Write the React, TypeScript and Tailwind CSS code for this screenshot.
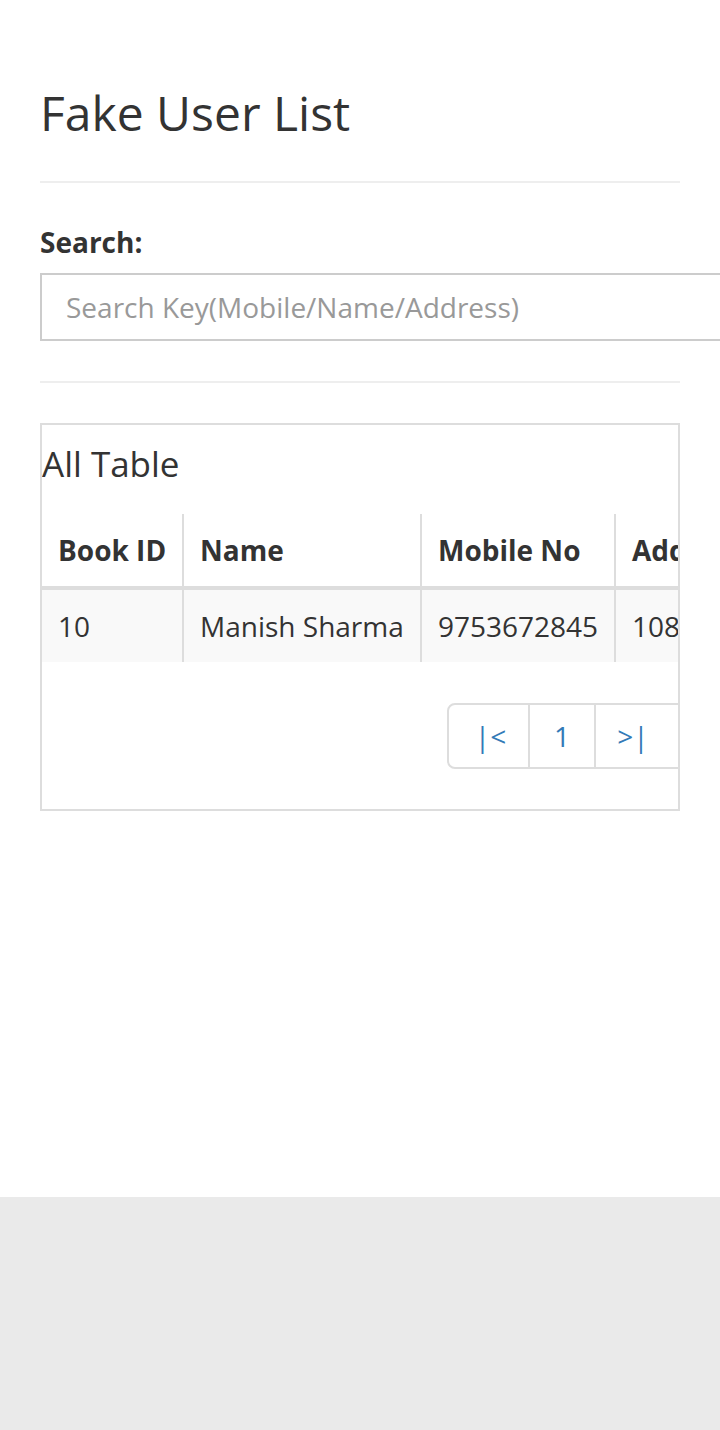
import React from 'react';

const FONT = { fontFamily: '"Open Sans", "Noto Sans", sans-serif' };

const columns = [
  { key: 'id', label: 'Book ID', width: 'w-[140px]' },
  { key: 'name', label: 'Name', width: 'w-[238px]' },
  { key: 'mobile', label: 'Mobile No', width: 'w-[194px]' },
  { key: 'address', label: 'Address', width: 'w-[420px]' },
];

const rows = [
  { id: '10', name: 'Manish Sharma', mobile: '9753672845', address: '108, Vijay Nagar, Indore' },
];

function Pagination() {
  return (
    <div className="flex justify-end mt-[41px] mb-[40px] -mr-[2px]">
      <a className="flex items-center justify-center w-[83px] h-[66px] pl-[4px] border-2 border-[#ddd] rounded-l-[8px] text-[#337ab7] text-[28px] leading-[40px]">
        |&lt;
      </a>
      <a className="flex items-center justify-center w-[68px] h-[66px] -ml-[2px] border-2 border-[#ddd] text-[#337ab7] text-[28px] leading-[40px]">
        1
      </a>
      <a className="flex items-center justify-center w-[86px] h-[66px] -ml-[2px] pr-[8px] border-2 border-[#ddd] text-[#337ab7] text-[28px] leading-[40px]">
        &gt;|
      </a>
    </div>
  );
}

export default function App() {
  return (
    <div className="min-h-[1430px] bg-[#eaeaea] overflow-hidden text-[#333]" style={FONT}>
      <div className="bg-white h-[1197px] px-10 pt-[87px]">
        <h1 className="text-[48px] leading-[1.1] font-normal">Fake User List</h1>
        <hr className="mt-[41px] h-0 border-0 border-t-2 border-[#eee]" />

        <label className="block mt-[39px] text-[28px] leading-[40px] font-bold">Search:</label>
        <input
          className="block mt-[11px] w-[760px] h-[68px] border-2 border-[#ccc] px-6 text-[28px] text-[#555] placeholder:text-[#999] outline-none"
          placeholder="Search Key(Mobile/Name/Address)"
        />

        <hr className="mt-[40px] h-0 border-0 border-t-2 border-[#eee]" />

        <div className="mt-[40px] border-2 border-[#ddd] overflow-hidden">
          <h4 className="mt-[19px] text-[35px] leading-[40px] font-normal">All Table</h4>

          <table className="mt-[30px] table-fixed border-separate border-spacing-0 w-[992px] text-[28px] leading-[40px]">
            <colgroup>
              {columns.map((c) => (
                <col key={c.key} className={c.width} />
              ))}
            </colgroup>
            <thead>
              <tr>
                {columns.map((c, i) => (
                  <th
                    key={c.key}
                    className={`h-[76px] text-left font-bold whitespace-nowrap border-b-4 border-[#ddd] ${
                      i === 0 ? 'pl-4' : 'border-l-2 pl-4'
                    }`}
                  >
                    {c.label}
                  </th>
                ))}
              </tr>
            </thead>
            <tbody>
              {rows.map((r) => (
                <tr key={r.id} className="bg-[#f9f9f9]">
                  <td className="h-[72px] pl-4 whitespace-nowrap">{r.id}</td>
                  <td className="h-[72px] pl-4 border-l-2 border-[#ddd] whitespace-nowrap">{r.name}</td>
                  <td className="h-[72px] pl-4 border-l-2 border-[#ddd] whitespace-nowrap">{r.mobile}</td>
                  <td className="h-[72px] pl-4 border-l-2 border-[#ddd] whitespace-nowrap">{r.address}</td>
                </tr>
              ))}
            </tbody>
          </table>

          <Pagination />
        </div>
      </div>
    </div>
  );
}
